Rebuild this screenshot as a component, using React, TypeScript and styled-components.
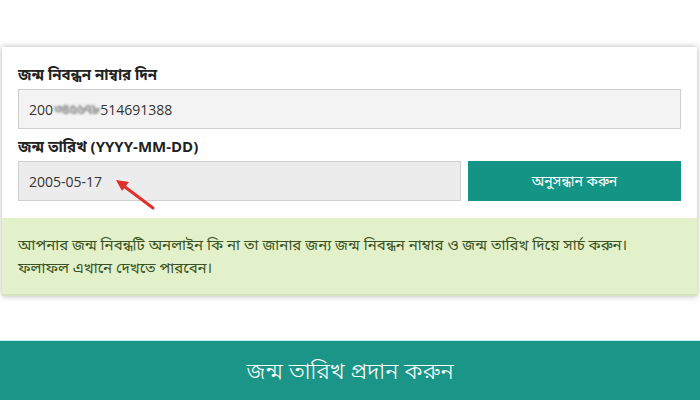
import styled, { createGlobalStyle } from "styled-components";

const GlobalStyle = createGlobalStyle`
  html, body {
    margin: 0;
    padding: 0;
    background: #ffffff;
  }
  body {
    width: 700px;
    height: 400px;
    overflow: hidden;
    font-family: "Open Sans", "Noto Sans Bengali", "Noto Sans", sans-serif;
  }
`;

const Page = styled.div`
  display: flex;
  flex-direction: column;
  width: 700px;
  height: 400px;
  padding-top: 47px;
  box-sizing: border-box;
`;

const Card = styled.div`
  margin: 0 3px 0 2px;
  background: #ffffff;
  box-shadow: 0 0 6px rgba(0, 0, 0, 0.3);
  display: flex;
  flex-direction: column;
`;

const Form = styled.div`
  position: relative;
  padding: 17px 16px 17px 16px;
  display: flex;
  flex-direction: column;
`;

const Label = styled.div<{ $first?: boolean }>`
  font-size: 15px;
  font-weight: 700;
  color: #222;
  line-height: 20px;
  margin-bottom: 5px;
  margin-top: ${(p) => (p.$first ? "0" : "7px")};
`;

const Row = styled.div`
  display: flex;
  gap: 7px;
`;

const Field = styled.div<{ $tone?: string }>`
  flex: 1;
  height: 40px;
  box-sizing: border-box;
  border: 1px solid #cfcfcf;
  background: ${(p) => p.$tone || "#f3f3f3"};
  display: flex;
  align-items: center;
  padding-left: 10px;
  font-size: 14px;
  color: #333;
`;

const Blurred = styled.span`
  display: inline-block;
  filter: blur(1.1px);
  color: #8f8f8f;
  font-size: 14px;
  font-weight: 700;
  letter-spacing: -1px;
  margin: 0 1px;
`;

const SearchButton = styled.button`
  width: 213px;
  height: 40px;
  border: none;
  background: #139484;
  color: #ffffff;
  font-size: 14px;
  font-family: inherit;
  cursor: pointer;
`;

const Arrow = styled.svg`
  position: absolute;
  left: 107px;
  top: 126px;
`;

const Notice = styled.div`
  background: #e3f1cb;
  color: #3b5323;
  font-size: 15px;
  line-height: 23px;
  padding: 15px 15px 15px 16px;
  border-bottom: 2px solid #d4e4ba;
`;

const Banner = styled.div`
  margin-top: auto;
  height: 59px;
  background: #1a9587;
  color: #ffffff;
  display: flex;
  align-items: center;
  justify-content: center;
  font-size: 23px;
  font-weight: 300;
  border-top: 1px solid #bff0e8;
`;

export default function App() {
  return (
    <>
      <GlobalStyle />
      <Page>
        <Card>
          <Form>
            <Label $first>জন্ম নিবন্ধন নাম্বার দিন</Label>
            <Row>
              <Field>
                200<Blurred>৩৪৫৬৭৮</Blurred>514691388
              </Field>
            </Row>
            <Label>জন্ম তারিখ (YYYY-MM-DD)</Label>
            <Row>
              <Field $tone="#ececec">2005-05-17</Field>
              <SearchButton>অনুসন্ধান করুন</SearchButton>
            </Row>
            <Arrow width="50" height="40" viewBox="0 0 50 40">
              <line x1="44" y1="35" x2="12" y2="11" stroke="#e0302a" strokeWidth="3" strokeLinecap="round" />
              <polygon points="7,7 20,9 13,18" fill="#e0302a" />
            </Arrow>
          </Form>
          <Notice>
            আপনার জন্ম নিবন্ধটি অনলাইন কি না তা জানার জন্য জন্ম নিবন্ধন নাম্বার ও জন্ম তারিখ দিয়ে সার্চ করুন।
            <br />
            ফলাফল এখানে দেখতে পারবেন।
          </Notice>
        </Card>
        <Banner>জন্ম তারিখ প্রদান করুন</Banner>
      </Page>
    </>
  );
}
